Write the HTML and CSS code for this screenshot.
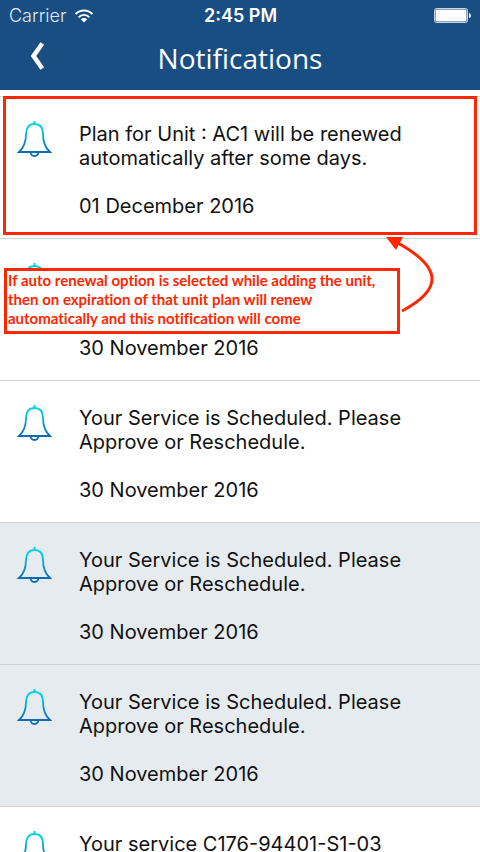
FILE: index.html
```html
<!DOCTYPE html>
<html lang="en">
<head>
<meta charset="utf-8">
<meta name="viewport" content="width=device-width, initial-scale=1">
<title>Notifications</title>
<link rel="stylesheet" href="styles.css">
</head>
<body>
<svg width="0" height="0" class="defs" aria-hidden="true">
  <defs>
    <linearGradient id="bell-fill" gradientUnits="userSpaceOnUse" x1="0" y1="0" x2="0" y2="36">
      <stop offset="0.15" stop-color="#00d0e4"/>
      <stop offset="0.85" stop-color="#0a6cb4"/>
    </linearGradient>
    <symbol id="bell" viewBox="0 0 36 37">
      <g fill="none" stroke="url(#bell-fill)" stroke-width="1.8">
        <path d="M18.500 0V3"/>
        <path d="M3 31C8 26.500 10 21 10 13C10 6.500 13.200 3 18.500 3S27 6.500 27 13C27 21 29 26.500 34 31Z"/>
        <path d="M14.500 31C15 36.300 22 36.300 22.500 31"/>
      </g>
    </symbol>
  </defs>
</svg>
<div class="screen">
  <header class="header">
    <div class="status">
      <div class="carrier">Carrier
        <svg width="20" height="14" viewBox="0 0 20 14" aria-hidden="true">
          <g fill="none" stroke="#fff" stroke-width="2">
            <path d="M1.500 5C6.400 0.200 13.600 0.200 18.500 5"/>
            <path d="M4.600 8.200C7.800 5.200 12.200 5.200 15.400 8.200"/>
          </g>
          <path d="M10 13.500L6.800 10.300Q10 7.900 13.200 10.300Z" fill="#fff"/>
        </svg>
      </div>
      <time class="clock">2:45 PM</time>
      <svg class="battery" width="38" height="15" viewBox="0 0 38 15" aria-hidden="true">
        <rect x="0.500" y="0.500" width="33" height="14" rx="2" fill="none" stroke="#c6d3e0"/>
        <rect x="1.500" y="1.500" width="31" height="12" rx="1" fill="#fff"/>
        <path d="M35 5Q37 5.500 37 7.500T35 10Z" fill="#fff"/>
      </svg>
    </div>
    <div class="bar">
      <button class="back" type="button" aria-label="Back">
        <svg width="16" height="28" viewBox="0 0 16 28" aria-hidden="true"><path d="M13.300 1.500L4.500 14L13.300 26.500" fill="none" stroke="#fff" stroke-width="4.500"/></svg>
      </button>
      <h1>Notifications</h1>
    </div>
  </header>
  <main class="content">
    <ul class="list">
      <li class="item">
        <svg class="bell" aria-hidden="true"><use href="#bell"/></svg>
        <div class="body">
          <p class="message">Plan for Unit : AC1 will be renewed automatically after some days.</p>
          <time>01 December 2016</time>
        </div>
        <div class="highlight"></div>
      </li>
      <li class="item">
        <svg class="bell" aria-hidden="true"><use href="#bell"/></svg>
        <div class="body">
          <p class="message"></p>
          <time>30 November 2016</time>
        </div>
        <aside class="note">If auto renewal option is selected while adding the unit, then on expiration of that unit plan will renew automatically and this notification will come</aside>
        <svg class="arrow" width="56" height="80" viewBox="0 0 56 80" aria-hidden="true">
          <path d="M18 76Q48 60 48 44Q48 27 14 8" fill="none" stroke="#ff2600" stroke-width="3"/>
          <path d="M2 2L19 2L12 15Z" fill="#ff2600"/>
        </svg>
      </li>
      <li class="item">
        <svg class="bell" aria-hidden="true"><use href="#bell"/></svg>
        <div class="body">
          <p class="message">Your Service is Scheduled. Please Approve or Reschedule.</p>
          <time>30 November 2016</time>
        </div>
      </li>
      <li class="item unread">
        <svg class="bell" aria-hidden="true"><use href="#bell"/></svg>
        <div class="body">
          <p class="message">Your Service is Scheduled. Please Approve or Reschedule.</p>
          <time>30 November 2016</time>
        </div>
      </li>
      <li class="item unread">
        <svg class="bell" aria-hidden="true"><use href="#bell"/></svg>
        <div class="body">
          <p class="message">Your Service is Scheduled. Please Approve or Reschedule.</p>
          <time>30 November 2016</time>
        </div>
      </li>
      <li class="item">
        <svg class="bell" aria-hidden="true"><use href="#bell"/></svg>
        <div class="body">
          <p class="message">Your service C176-94401-S1-03</p>
        </div>
      </li>
    </ul>
  </main>
</div>
</body>
</html>
```
FILE: styles.css
```css
* { box-sizing: border-box; }

body {
  margin: 0;
  background: #fff;
  color: #111;
  font-family: Inter, "Liberation Sans", sans-serif;
}

.defs { position: absolute; }

.screen {
  display: flex;
  flex-direction: column;
  height: 100vh;
}

.header {
  flex: none;
  background: #194e82;
  color: #fff;
}

.status {
  display: grid;
  grid-template-columns: 1fr auto 1fr;
  align-items: center;
  height: 31px;
  padding: 0 8px 0 9px;
  font-size: 18px;
  line-height: 31px;
}

.carrier {
  display: flex;
  align-items: center;
  gap: 8px;
  color: #e3eaf1;
  font-weight: 300;
}

.clock { font-weight: 600; }

.battery { justify-self: end; }

.bar {
  display: grid;
  grid-template-columns: 60px 1fr 60px;
  align-items: center;
  height: 59px;
  padding: 0 4px 5px;
}

.back {
  display: flex;
  justify-content: center;
  padding: 0 0 4px 6px;
  border: 0;
  background: none;
  cursor: pointer;
}

h1 {
  margin: 0;
  font: 400 28px/40px "Open Sans", "Noto Sans", sans-serif;
  text-align: center;
}

.content {
  flex: 1;
  min-height: 0;
  overflow: hidden;
  padding-top: 6px;
}

.list {
  margin: 0;
  padding: 0;
  border-top: 1px solid #d4d6d8;
  list-style: none;
}

.item {
  position: relative;
  display: flex;
  gap: 27px;
  min-height: 142px;
  padding: 24px 56px 20px 16px;
  border-bottom: 1px solid #cfd2d4;
}

.item.unread { background: #e6ebef; }

.bell {
  flex: none;
  width: 36px;
  height: 37px;
}

.body {
  flex: 1;
  padding-top: 1px;
  font-size: 20px;
  line-height: 24px;
}

.message {
  min-height: 48px;
  margin: 0 0 24px;
}

.highlight {
  position: absolute;
  inset: -1px 3px 3px;
  border: 3px solid #ff2600;
}

.note {
  position: absolute;
  top: 29px;
  left: 4px;
  width: 396px;
  padding: 0 1px 3px;
  border: 3px solid #ff2600;
  background: #fff;
  color: #ff2600;
  font: 700 15px/19px Lato, sans-serif;
  font-variant-ligatures: none;
}

.arrow {
  position: absolute;
  top: -4px;
  left: 384px;
}
```
